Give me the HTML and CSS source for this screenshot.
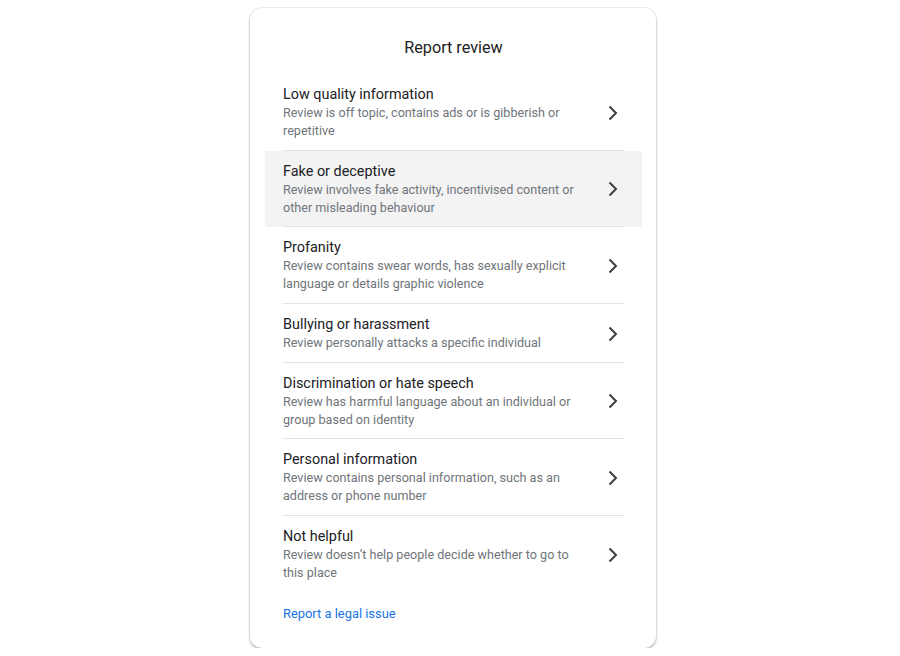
FILE: index.html
```html
<!DOCTYPE html>
<html lang="en">

<head>
    <meta charset="UTF-8">
    <meta name="viewport" content="width=device-width, initial-scale=1.0">
    <title>Report review</title>
    <link rel="stylesheet" href="styles.css">
</head>

<body>
    <div class="dialog">
        <h2 class="dialog-title">Report review</h2>
        <ul class="reasons">
            <li class="reason">
                <div class="reason-row">
                    <div class="reason-text">
                        <div class="reason-name">Low quality information</div>
                        <div class="reason-desc">Review is off topic, contains ads or is gibberish or repetitive</div>
                    </div>
                    <svg class="chevron" viewBox="0 0 10 16"><polyline points="1.5,1.5 8,8 1.5,14.5"/></svg>
                </div>
            </li>
            <li class="reason active">
                <div class="reason-row">
                    <div class="reason-text">
                        <div class="reason-name">Fake or deceptive</div>
                        <div class="reason-desc">Review involves fake activity, incentivised content or other misleading behaviour</div>
                    </div>
                    <svg class="chevron" viewBox="0 0 10 16"><polyline points="1.5,1.5 8,8 1.5,14.5"/></svg>
                </div>
            </li>
            <li class="reason">
                <div class="reason-row">
                    <div class="reason-text">
                        <div class="reason-name">Profanity</div>
                        <div class="reason-desc">Review contains swear words, has sexually explicit language or details graphic violence</div>
                    </div>
                    <svg class="chevron" viewBox="0 0 10 16"><polyline points="1.5,1.5 8,8 1.5,14.5"/></svg>
                </div>
            </li>
            <li class="reason">
                <div class="reason-row">
                    <div class="reason-text">
                        <div class="reason-name">Bullying or harassment</div>
                        <div class="reason-desc">Review personally attacks a specific individual</div>
                    </div>
                    <svg class="chevron" viewBox="0 0 10 16"><polyline points="1.5,1.5 8,8 1.5,14.5"/></svg>
                </div>
            </li>
            <li class="reason">
                <div class="reason-row">
                    <div class="reason-text">
                        <div class="reason-name">Discrimination or hate speech</div>
                        <div class="reason-desc">Review has harmful language about an individual or group based on identity</div>
                    </div>
                    <svg class="chevron" viewBox="0 0 10 16"><polyline points="1.5,1.5 8,8 1.5,14.5"/></svg>
                </div>
            </li>
            <li class="reason">
                <div class="reason-row">
                    <div class="reason-text">
                        <div class="reason-name">Personal information</div>
                        <div class="reason-desc">Review contains personal information, such as an address or phone number</div>
                    </div>
                    <svg class="chevron" viewBox="0 0 10 16"><polyline points="1.5,1.5 8,8 1.5,14.5"/></svg>
                </div>
            </li>
            <li class="reason">
                <div class="reason-row">
                    <div class="reason-text">
                        <div class="reason-name">Not helpful</div>
                        <div class="reason-desc">Review doesn’t help people decide whether to go to this place</div>
                    </div>
                    <svg class="chevron" viewBox="0 0 10 16"><polyline points="1.5,1.5 8,8 1.5,14.5"/></svg>
                </div>
            </li>
        </ul>
        <a class="legal-link">Report a legal issue</a>
    </div>
</body>

</html>
```

FILE: styles.css
```css
* {
    margin: 0;
    padding: 0;
    box-sizing: border-box;
}

body {
    background: #fff;
    font-family: Roboto, "Liberation Sans", Arial, sans-serif;
    padding: 8px 0 0 250px;
}

.dialog {
    width: 406px;
    height: 640px;
    background: #fff;
    border-radius: 12px;
    box-shadow: 0 0 0 1px rgba(0,0,0,.07), 0 2px 3px rgba(60,64,67,.3);
    padding: 28px 14px 0 15px;
}

.dialog-title {
    font-size: 16.2px;
    font-weight: 400;
    line-height: 24px;
    color: #202124;
    text-align: center;
    margin-bottom: 14px;
}

.reasons {
    list-style: none;
}

.reason {
    padding: 0 18px;
    cursor: pointer;
}

.reason.active {
    background: #f3f3f3;
}

.reason-row {
    display: flex;
    align-items: center;
    padding: 11px 0 9.7px;
    border-bottom: 1px solid #e3e3e3;
}

.reason:last-child .reason-row {
    border-bottom: none;
}

.reason-text {
    flex: 1;
    padding-right: 20px;
}

.reason-name {
    font-size: 14.4px;
    line-height: 19px;
    color: #202124;
}

.reason-desc {
    font-size: 12.6px;
    line-height: 18px;
    color: #70757a;
}

.chevron {
    width: 10px;
    height: 16px;
    fill: none;
    stroke: #3c4043;
    stroke-width: 2;
    margin-right: 6px;
    flex-shrink: 0;
}

.legal-link {
    display: block;
    padding: 12px 18px 10px;
    font-size: 12.9px;
    line-height: 20px;
    color: #1a73e8;
    cursor: pointer;
}
```
